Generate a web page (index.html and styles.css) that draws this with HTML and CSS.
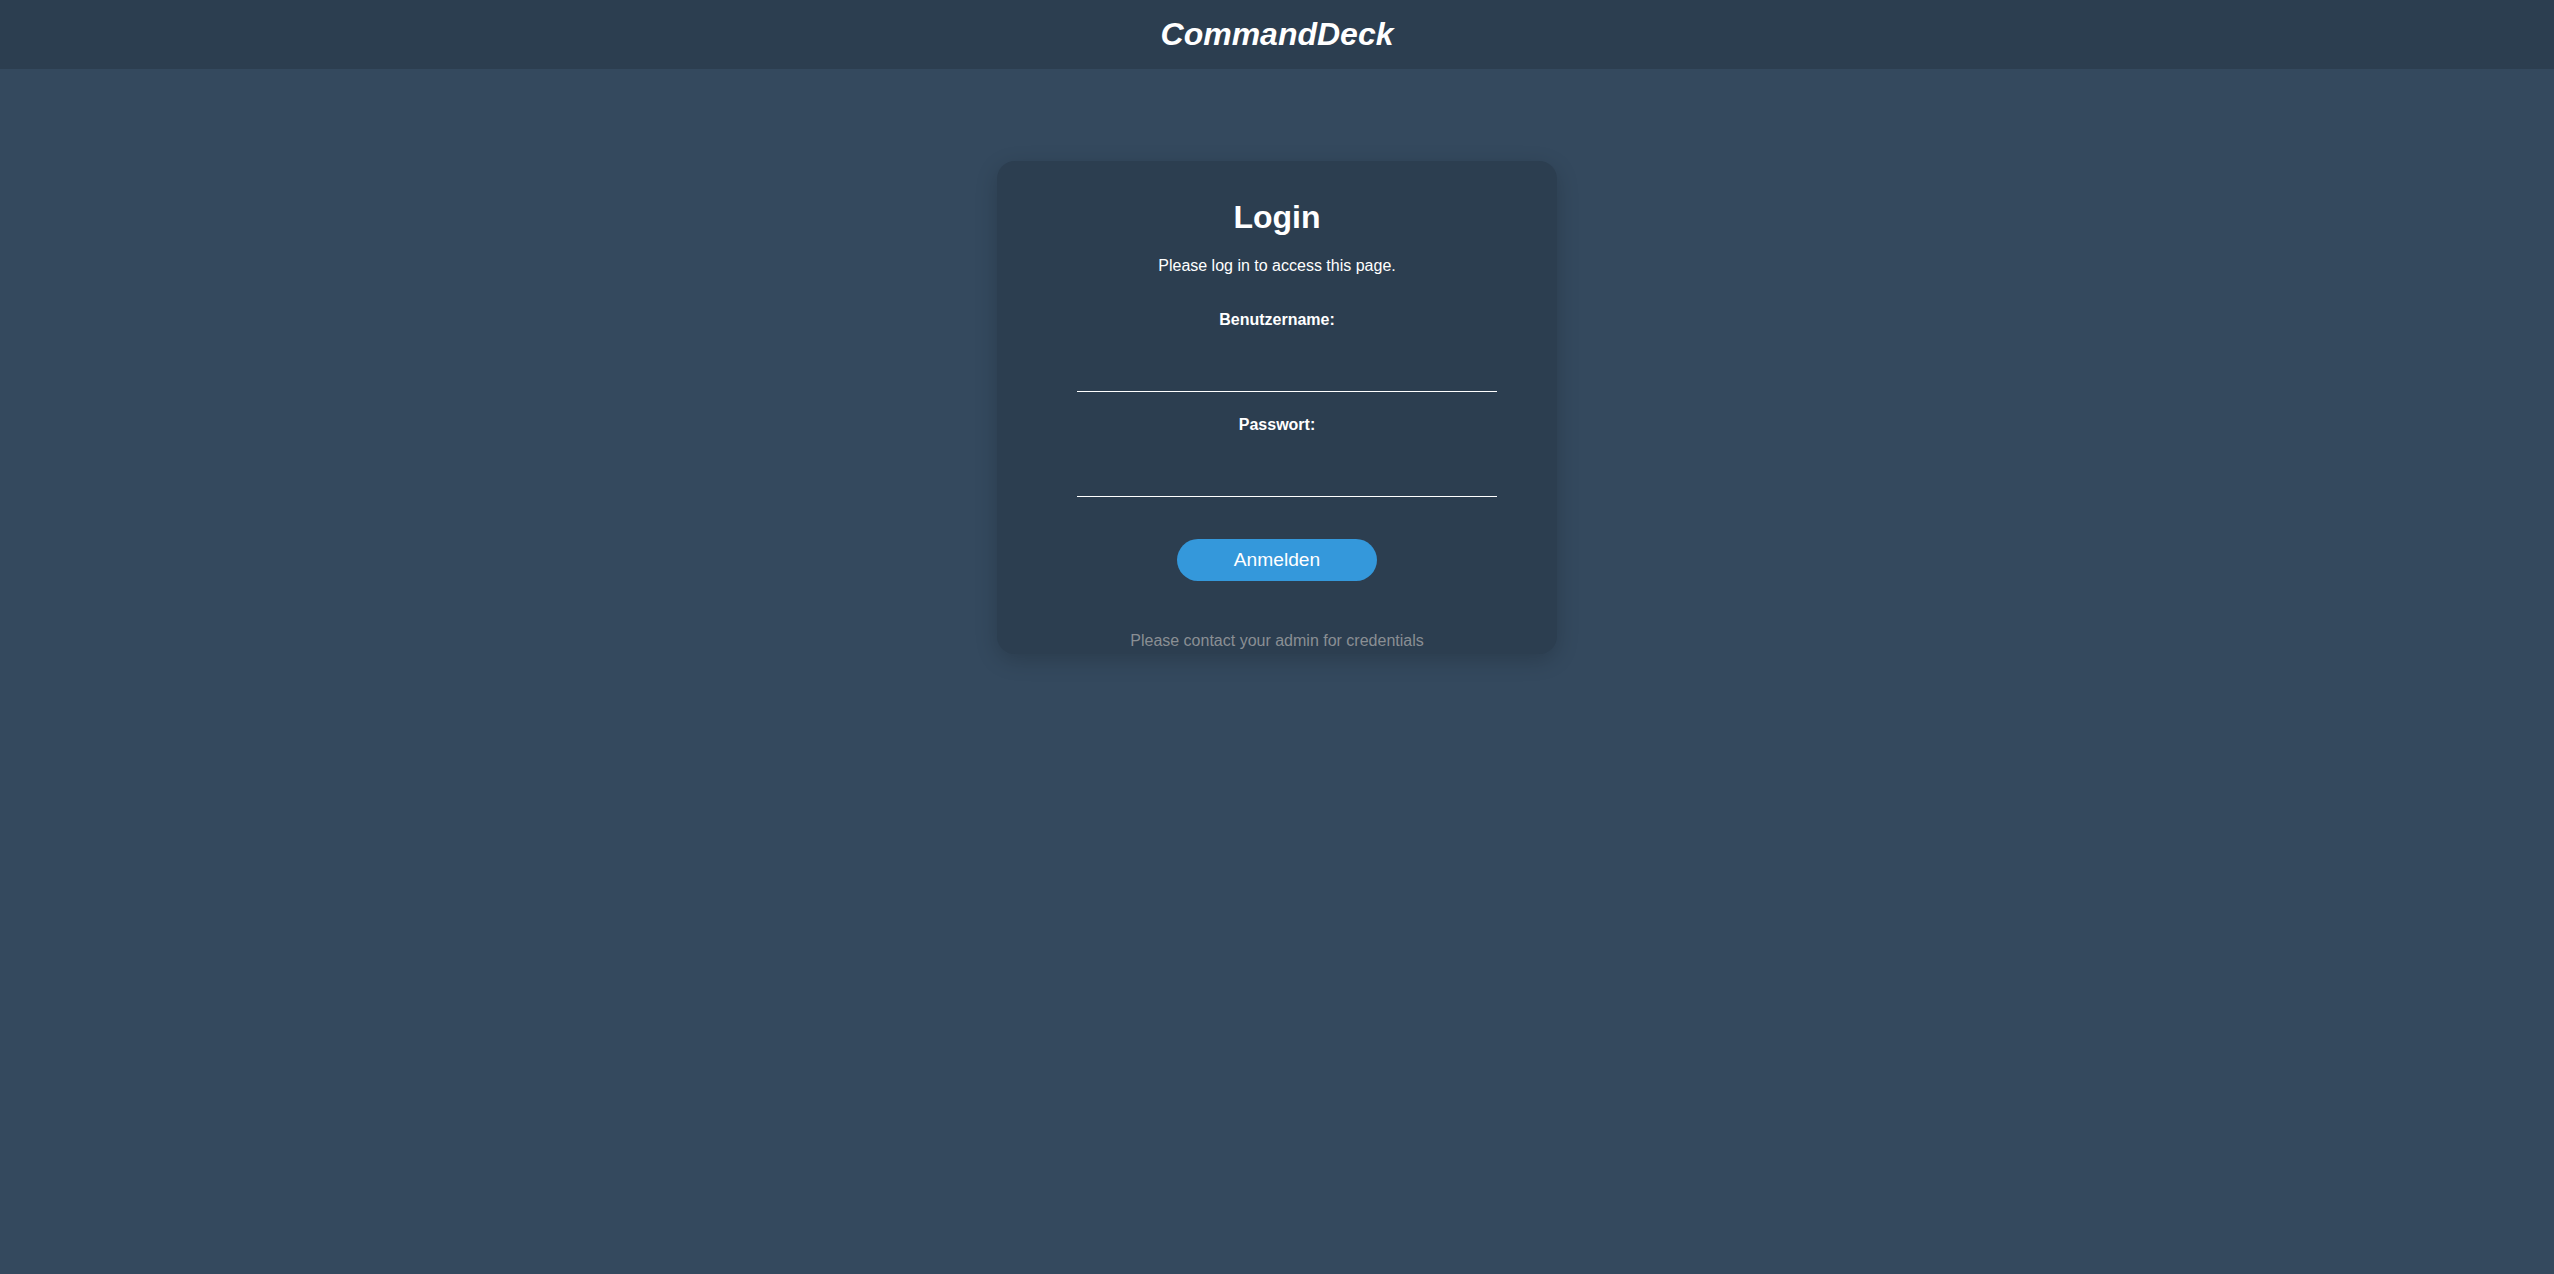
FILE: index.html
```html
<!DOCTYPE html>
<html lang="de">
<head>
<meta charset="utf-8">
<title>CommandDeck - Login</title>
<link rel="stylesheet" href="styles.css">
</head>
<body>
<header class="topbar">
  <h1 class="brand">CommandDeck</h1>
</header>
<main class="main">
  <section class="card">
    <h2 class="card-title">Login</h2>
    <p class="card-intro">Please log in to access this page.</p>
    <form class="login-form">
      <label class="field-label" for="username">Benutzername:</label>
      <input class="field-input" type="text" id="username" name="username">
      <label class="field-label" for="password">Passwort:</label>
      <input class="field-input" type="password" id="password" name="password">
      <button class="submit-btn" type="button">Anmelden</button>
    </form>
    <p class="card-note">Please contact your admin for credentials</p>
  </section>
</main>
</body>
</html>
```

FILE: styles.css
```css
html, body {
  margin: 0;
  padding: 0;
}

body {
  background: #34495e;
  font-family: "Liberation Sans", Arial, sans-serif;
  color: #ffffff;
  min-height: 100vh;
}

.topbar {
  background: #2c3e50;
  padding: 16px 0;
  text-align: center;
}

.brand {
  margin: 0;
  font-size: 32px;
  font-weight: bold;
  font-style: italic;
  color: #ffffff;
}

.main {
  padding-top: 92px;
}

.card {
  box-sizing: border-box;
  width: 560px;
  margin: 0 auto;
  background: #2c3e50;
  border-radius: 18px;
  box-shadow: 0 6px 22px rgba(0, 0, 0, 0.18);
  padding: 20px 80px 4px;
  text-align: center;
}

.card-title {
  margin: 18px 0 21px;
  font-size: 32px;
  font-weight: bold;
  color: #ffffff;
}

.card-intro {
  margin: 0 0 36px;
  font-size: 16px;
  color: #ffffff;
}

.login-form {
  display: flex;
  flex-direction: column;
  align-items: center;
}

.field-label {
  display: block;
  font-size: 16px;
  font-weight: bold;
  color: #ffffff;
  line-height: normal;
}

.field-input {
  display: block;
  align-self: flex-start;
  width: 100%;
  box-sizing: content-box;
  height: 39px;
  padding: 0 10px;
  margin: 22.5px 0 24.5px;
  background: transparent;
  border: none;
  border-bottom: 1px solid #ffffff;
  color: #ffffff;
  font-family: inherit;
  font-size: 16px;
  outline: none;
}

.submit-btn {
  margin-top: 18px;
  width: 200px;
  height: 42px;
  border: none;
  border-radius: 21px;
  background: #3498db;
  color: #ffffff;
  font-family: inherit;
  font-size: 19.2px;
  cursor: pointer;
}

.card-note {
  margin: 51px 0 0;
  font-size: 16px;
  color: #8a8f94;
}
```
